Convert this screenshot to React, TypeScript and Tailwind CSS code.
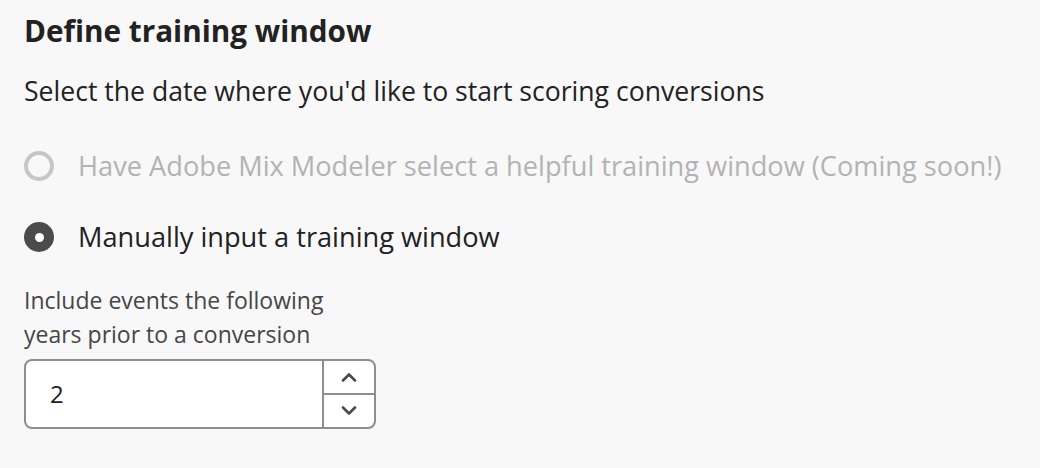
import React, { useState } from 'react';

const FONT = 'font-["Open_Sans","Noto_Sans",sans-serif]';

export default function App() {
    const [mode, setMode] = useState<'auto' | 'manual'>('manual');
    const [years, setYears] = useState(2);

    return (
        <div className={`min-h-[468px] w-[1040px] bg-[#f8f8f8] pl-6 pt-3 ${FONT}`}>
            <h2 className="h-[38px] text-[29.7px] font-bold leading-[38px] text-[#222]">
                Define training window
            </h2>
            <p className="mt-[22px] h-[38px] text-[26.6px] leading-[38px] text-[#222]">
                Select the date where you'd like to start scoring conversions
            </p>

            <div className="mt-8 flex flex-col gap-[23px]">
                <Radio
                    label="Have Adobe Mix Modeler select a helpful training window (Coming soon!)"
                    checked={mode === 'auto'}
                    disabled
                    onSelect={() => setMode('auto')}
                />
                <Radio
                    label="Manually input a training window"
                    checked={mode === 'manual'}
                    onSelect={() => setMode('manual')}
                />
            </div>

            <label className="mt-[22px] block w-[330px] text-[23px] leading-[34px] text-[#464646]">
                Include events the following years prior to a conversion
            </label>

            <div className="mt-2 flex h-[70px] w-[352px] overflow-hidden rounded-lg border-2 border-[#8e8e8e] bg-white">
                <input
                    type="text"
                    value={years}
                    onChange={(e) => setYears(parseInt(e.target.value) || 0)}
                    className="min-w-0 flex-1 bg-transparent pl-6 text-[24px] text-[#222] outline-none"
                />
                <div className="flex w-[52px] flex-none flex-col border-l-2 border-[#8e8e8e]">
                    <button
                        type="button"
                        onClick={() => setYears((y) => y + 1)}
                        className="flex flex-1 items-center justify-center border-b-2 border-[#8e8e8e] text-[#4b4b4b]"
                    >
                        <Chevron up />
                    </button>
                    <button
                        type="button"
                        onClick={() => setYears((y) => Math.max(0, y - 1))}
                        className="flex flex-1 items-center justify-center text-[#4b4b4b]"
                    >
                        <Chevron />
                    </button>
                </div>
            </div>
        </div>
    );
}

function Radio({ label, checked, disabled, onSelect }: { label: string; checked: boolean; disabled?: boolean; onSelect: () => void }) {
    return (
        <button
            type="button"
            disabled={disabled}
            onClick={onSelect}
            className="flex h-12 items-center gap-6 text-left"
        >
            {checked ? (
                <span className="flex h-[30px] w-[30px] flex-none items-center justify-center rounded-full bg-[#4b4b4b]">
                    <span className="h-[9px] w-[9px] rounded-full bg-white" />
                </span>
            ) : (
                <span className="h-[30px] w-[30px] flex-none rounded-full border-4 border-[#c6c6c6]" />
            )}
            <span className={`text-[27.2px] ${disabled ? 'text-[#b3b3b3]' : 'text-[#222]'}`}>{label}</span>
        </button>
    );
}

function Chevron({ up }: { up?: boolean }) {
    return (
        <svg width="16" height="10" viewBox="0 0 16 10" fill="none">
            <path
                d={up ? 'M2 8.5 8 2.5l6 6' : 'M2 1.5l6 6 6-6'}
                stroke="currentColor"
                strokeWidth="2.6"
                strokeLinecap="round"
                strokeLinejoin="round"
            />
        </svg>
    );
}
